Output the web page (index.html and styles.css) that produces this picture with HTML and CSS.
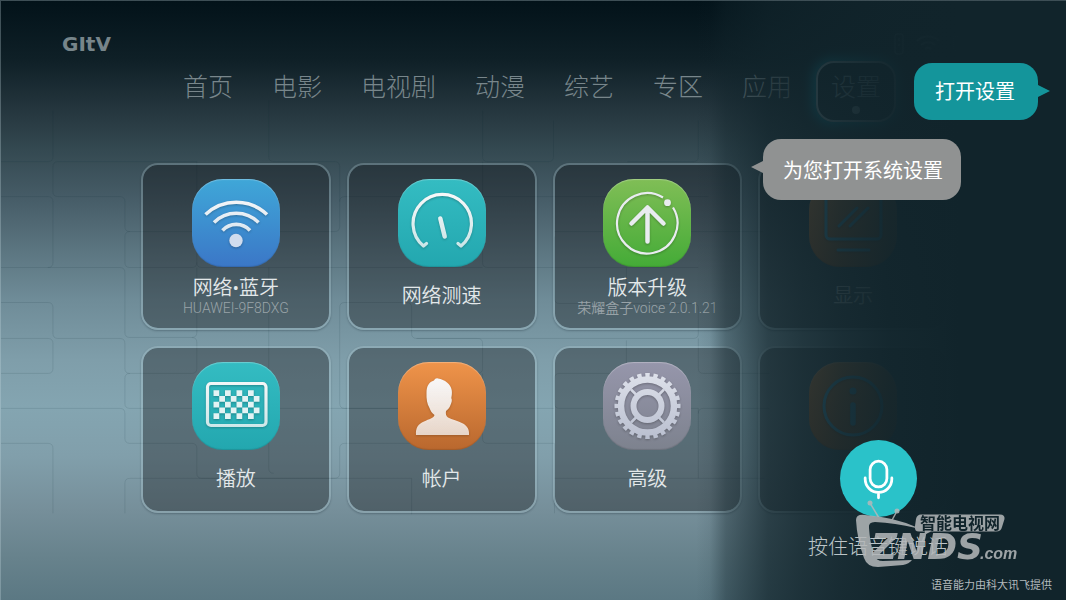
FILE: index.html
```html
<!DOCTYPE html>
<html lang="zh-CN">
<head>
<meta charset="utf-8">
<title>GITV 设置</title>
<link rel="stylesheet" href="styles.css">
</head>
<body>
<div class="screen">
  <svg class="bricks" viewBox="0 0 1066 600" preserveAspectRatio="xMidYMid slice" aria-hidden="true">
    <path d="M0 161H47q5 0 5-5V110M196 161H57q-5 0-5 5v25q0 5 5 5h62q5 0 5 5v25q0 5 5 5H334q5 0 5-5v-60q0-5-5-5H273q-5 0-5-5V100
      M0 196H47q5 0 5 5v61q0 5-5 5H0M47 267H119q5 0 5 5v60q0 5 5 5h62q5 0 5-5V267M129 231q-5 0-5 5v26q0 5 5 5h62q5 0 5-5V161M196 262q0 5 5 5h281
      M0 302H47q5 0 5 5v26q0 5 5 5H119q5 0 5 5v25q0 5 5 5h62q5 0 5-5v-26q0-5-5-5M0 338H47q5 0 5 5v25q0 5-5 5H0
      M0 408H119q5 0 5 5v25q0 5 5 5h62q5 0 5 5v25q0 5 5 5h133q5 0 5-5v-25q0-5 5-5h66q5 0 5-5v-25q0-5-5-5H129q-5 0-5-5v-25q0-5 5-5
      M0 443H47q5 0 5 5v65M124 513v-30q0-5 5-5h282M411 478v36M268 267v201q0 5 5 5M339 307q0-5 5-5h62q5 0 5 5v26q0 5 5 5h61q5 0 5 5v25q0 5-5 5
      M339 307v96q0 5 5 5h210M482 110v46q0 5 5 5h61q5 0 5-5V120M339 201q0-5 5-5h364M482 161v101q0 5 5 5h211M554 236v62q0 5 5 5h134q5 0 5 5v25q0 5-5 5H416
      M554 231h209M626 267v35M554 378q0-5 5-5h67V340M698 338v30q0 5 5 5h66M554 378v25q0 5 5 5h139M698 408v70M698 413q0-5 5-5h66M482 408v30q0 5 5 5h67V513M626 443v-35M698 120v36q0 5-5 5h-66M482 373v35M554 478h210"/>
  </svg>

  <header class="topbar">
    <span class="logo">GItV</span>
    <div class="status">
      <svg width="12" height="22" viewBox="0 0 12 22" fill="none" stroke="currentColor" aria-hidden="true"><rect x="2" y="1" width="8" height="20" rx="2"/><path d="M6 5v3M6 11v2"/></svg>
      <svg width="26" height="20" viewBox="0 0 26 20" fill="none" stroke="currentColor" stroke-width="2" aria-hidden="true"><path d="M2 7a16 16 0 0 1 22 0M6 11a10 10 0 0 1 14 0M10 15a5 5 0 0 1 6 0"/></svg>
      <time>07:32</time>
    </div>
  </header>

  <nav class="tabs">
    <a class="tab" href="#home">首页</a>
    <a class="tab" href="#movie">电影</a>
    <a class="tab" href="#tv">电视剧</a>
    <a class="tab" href="#anime">动漫</a>
    <a class="tab" href="#variety">综艺</a>
    <a class="tab" href="#zone">专区</a>
    <a class="tab" href="#apps">应用</a>
    <a class="tab tab-active" href="#settings" aria-current="page">设置</a>
  </nav>

  <svg class="defs" width="0" height="0" aria-hidden="true">
    <defs>
      <linearGradient id="ink" gradientUnits="userSpaceOnUse" x1="0" y1="16" x2="0" y2="74"><stop offset="0" stop-color="#f7f7f8"/><stop offset="1" stop-color="#fff" stop-opacity=".74"/></linearGradient>
      <linearGradient id="steel" gradientUnits="userSpaceOnUse" x1="0" y1="12" x2="0" y2="77"><stop offset="0" stop-color="#dde0ea"/><stop offset="1" stop-color="#b9bfcf"/></linearGradient>
    </defs>
  </svg>

  <main class="tiles">
    <button class="tile" type="button">
      <span class="icon icon-blue"><svg viewBox="0 0 88 88" fill="none" stroke="url(#ink)" stroke-width="3.600" aria-hidden="true">
        <path d="M13.500 35.500A44.700 44.700 0 0 1 75 35.500M22 43.500A31.400 31.400 0 0 1 66.500 43.500M30.500 51.500A18.500 18.500 0 0 1 58 51.500"/><circle cx="44" cy="61.500" r="6.700" fill="#d0dcee" stroke="none"/></svg></span>
      <span class="caption"><span class="name">网络•蓝牙</span><span class="note">HUAWEI-9F8DXG</span></span>
    </button>
    <button class="tile" type="button">
      <span class="icon icon-teal"><svg viewBox="0 0 88 88" fill="none" stroke="url(#ink)" stroke-linecap="round" stroke-linejoin="round" aria-hidden="true">
        <path stroke-width="3.200" d="M28.500 64.500L25.500 67A29.200 29.200 0 1 1 63 67L60 64.500"/><path stroke-width="4.500" d="M42.300 39.500L46.700 57.500"/></svg></span>
      <span class="caption"><span class="name">网络测速</span></span>
    </button>
    <button class="tile" type="button">
      <span class="icon icon-green"><svg viewBox="0 0 88 88" fill="none" stroke="#e9ecf0" aria-hidden="true">
        <path stroke-width="2.200" d="M70 28.500A30.200 30.200 0 1 1 60 18.500"/><circle cx="64.500" cy="23.700" r="3.400" fill="#e9ecf0" stroke="none"/><path stroke-width="4.500" stroke-linecap="round" stroke-linejoin="round" d="M44.500 62.500V29M28.500 44.500L44.500 28.500L60.500 44.500"/></svg></span>
      <span class="caption"><span class="name">版本升级</span><span class="note">荣耀盒子voice 2.0.1.21</span></span>
    </button>
    <button class="tile" type="button">
      <span class="icon icon-orange"><svg viewBox="0 0 88 88" fill="none" stroke="#5fc4ec" stroke-width="3" stroke-linecap="round" aria-hidden="true">
        <rect x="17" y="16" width="55" height="44" rx="4"/><path d="M30 47L48 29M41 47L59 29M29 71H60"/></svg></span>
      <span class="caption"><span class="name">显示</span></span>
    </button>
    <button class="tile" type="button">
      <span class="icon icon-teal"><svg viewBox="0 0 88 88" fill="none" stroke="url(#ink)" aria-hidden="true">
        <rect x="15.500" y="21.500" width="58.500" height="42" rx="3.500" stroke-width="3.200"/>
        <g stroke="#e3f3f4" stroke-width="5.750" stroke-dasharray="5.750 5.750"><path d="M21.500 31H67.500"/><path d="M27.250 36.750H67.500"/><path d="M21.500 42.500H67.500"/><path d="M27.250 48.250H67.500"/><path d="M21.500 54H67.500"/></g></svg></span>
      <span class="caption"><span class="name">播放</span></span>
    </button>
    <button class="tile" type="button">
      <span class="icon icon-orange"><svg viewBox="0 0 88 88" fill="url(#ink)" aria-hidden="true">
        <path d="M18 73C17.500 66 20 62 26 59.500C31 57 36 56 36.500 53C34 51 32.500 49 31.500 46C29 42 28.300 37 28.500 31C28.500 24 31 20 36 18.500C37 16.500 38.500 16 40 16.500C47 17.500 52.500 22 53.700 28C54.200 31 53.700 34 53.300 36C54.500 38 53.500 41 52.500 43C51.500 46 50 47.500 48 49C47.500 52 48 54 50 55.500C54 57.500 60 59 65 61.500C69.500 64 71.500 68 71 73Z"/></svg></span>
      <span class="caption"><span class="name">帐户</span></span>
    </button>
    <button class="tile" type="button">
      <span class="icon icon-gray"><svg viewBox="0 0 88 88" fill="none" stroke="url(#steel)" aria-hidden="true">
        <circle cx="44.500" cy="44" r="26.500" stroke-width="6.500"/><circle cx="44.500" cy="44" r="30.800" stroke-width="4.500" pathLength="48" stroke-dasharray="1.100 .9" stroke-dashoffset=".55"/>
        <circle cx="44.500" cy="44" r="14" stroke-width="6"/><path stroke-width="2.500" d="M28 27.500L34 33.500M61 27.500L55 33.500M28 60.500L34 54.500M61 60.500L55 54.500"/></svg></span>
      <span class="caption"><span class="name">高级</span></span>
    </button>
    <button class="tile" type="button" aria-label="关于">
      <span class="icon icon-orange"><svg viewBox="0 0 88 88" fill="none" stroke="#5fc4ec" stroke-width="3" stroke-linecap="round" aria-hidden="true">
        <circle cx="44" cy="44" r="29"/><circle cx="44" cy="29" r="3.500" fill="#5fc4ec" stroke="none"/><path stroke-width="5.500" d="M44 43V61"/></svg></span>
    </button>
  </main>

  <aside class="voice">
    <p class="bubble bubble-user">打开设置</p>
    <p class="bubble bubble-reply">为您打开系统设置</p>
    <button class="mic" type="button" aria-label="语音">
      <svg width="77" height="77" viewBox="0 0 78 78" fill="none" stroke="#fff" stroke-width="2.800" stroke-linecap="round" aria-hidden="true">
        <rect x="30.500" y="21.500" width="17" height="26" rx="8.500"/><path d="M25.500 38.500v1a13.500 13.500 0 0 0 27 0v-1M39 53.500V58.500"/></svg>
    </button>
    <p class="hint">按住语音键说话</p>
    <p class="credit">语音能力由科大讯飞提供</p>
  </aside>

  <svg class="watermark" width="168" height="70" viewBox="0 0 168 70" role="img" aria-label="智能电视网 ZNDS.com">
    <g fill="#b4b8ba">
      <path d="M3 20Q3 14 12 15Q40 17 63 27V28Q42 23 22 22Q15 22 16 28Q17 43 21 55Q23 61 30 61L59 60Q56 64 50 65Q38 66 25 67Q14 67 11 58Q4 39 3 20Z"/>
      <circle cx="17" cy="3" r="2.500"/><circle cx="44" cy="11" r="2.500"/>
      <path d="M17 3L26 18M44 11L38 22" stroke="#b4b8ba" stroke-width="1.500"/>
      <path d="M68 14.500H147Q152 14.500 151.500 19L149 27Q148 31.500 143 31.500H78L71 35L72 31.500H66Q61 31.500 62 26L63 19Q64 14.500 68 14.500Z"/>
      <text class="wm-main" x="18" y="59">ZNDS</text>
      <text class="wm-com" x="127" y="59">.com</text>
    </g>
    <text class="wm-cn" x="67" y="29">智能电视网</text>
  </svg>
</div>
</body>
</html>
```

FILE: styles.css
```css
* {
  box-sizing: border-box;
}

body {
  margin: 0;
  font-family: Roboto, "Noto Sans CJK SC", sans-serif;
}

p {
  margin: 0;
}

button {
  font: inherit;
  color: inherit;
}

.screen {
  position: relative;
  min-height: 100vh;
  overflow: hidden;
  border: solid rgba(200, 220, 225, .3);
  border-width: 1px 0 0 1px;
  background: linear-gradient(180deg, #021219 0%, #0f2027 10%, #24353d 18%, #344951 25%, #465c67 33%, #5c7681 42%, #6f8c98 50%, #7f9eaa 60%, #84a5b1 68%, #819fab 76%, #768f9a 85%, #67828c 93%, #5b7883 100%);
  background-origin: border-box;
}

.bricks {
  position: absolute;
  inset: 0;
  width: 100%;
  height: 100%;
  fill: none;
  stroke: rgba(10, 35, 45, .11);
}

.defs {
  position: absolute;
}

.topbar {
  position: relative;
  display: flex;
  justify-content: space-between;
  align-items: center;
  padding: 29px 60px 3px 61px;
}

.logo {
  font: bold 20px/28px "DejaVu Sans", sans-serif;
  color: #77858a;
}

.status {
  display: flex;
  align-items: center;
  gap: 10px;
  font-size: 22px;
  line-height: 28px;
  color: #8ba0a8;
}

.tabs {
  position: relative;
  display: flex;
  gap: 9px;
  padding-left: 167px;
}

.tab {
  display: flex;
  flex-direction: column;
  align-items: center;
  height: 61px;
  padding: 9px 13px 7px;
  border: 2px solid transparent;
  border-radius: 18px;
  font-size: 25px;
  font-weight: 300;
  line-height: 32px;
  color: #78868b;
  text-decoration: none;
}

.tab-active {
  border-color: #a5bbc2;
  color: #a5bbc2;
  box-shadow: 0 0 12px 3px #0ba5be;
}

.tab-active::after {
  content: "";
  flex: none;
  width: 8px;
  height: 8px;
  margin-top: 2px;
  border-radius: 50%;
  background: #a5bbc2;
}

.tiles {
  position: relative;
  display: grid;
  grid-template-columns: repeat(4, 1fr);
  gap: 16px;
  padding: 41px 118px 80px 140px;
}

.tile {
  display: flex;
  flex-direction: column;
  align-items: center;
  height: 167px;
  padding: 14px 0 4px;
  border: 2px solid rgba(190, 215, 222, .27);
  border-radius: 17px;
  background: rgba(10, 10, 12, .34);
  background-clip: padding-box;
  box-shadow: 0 1px 2px rgba(0, 20, 30, .25);
  color: #e3e8ea;
}

.icon {
  flex: none;
  width: 88px;
  height: 88px;
  border-radius: 31px;
  box-shadow: inset 0 1px 1px rgba(255, 255, 255, .28), inset 0 -1px 1px rgba(0, 0, 0, .12);
}

.icon svg {
  display: block;
  filter: drop-shadow(0 1px 1px rgba(0, 0, 0, .25));
}

.icon-blue {
  background: linear-gradient(#3fa7d8, #3b77c7);
}

.icon-teal {
  background: linear-gradient(#34bcc2, #23a7af);
}

.icon-green {
  background: linear-gradient(#80be56, #44ab37);
}

.icon-orange {
  background: linear-gradient(#ef944a, #b9682e);
}

.icon-gray {
  background: linear-gradient(#9696ab, #7d828e);
}

.caption {
  flex: 1;
  display: flex;
  flex-direction: column;
  justify-content: center;
  align-items: center;
}

.name {
  font-size: 20px;
  font-weight: 350;
  line-height: 24px;
}

.note {
  font-size: 14px;
  font-weight: 350;
  line-height: 16px;
  color: #99a3a8;
}

.voice {
  position: absolute;
  top: 0;
  right: 0;
  bottom: 0;
  display: flex;
  flex-direction: column;
  align-items: center;
  width: 376px;
  padding: 62px 0 5px;
  background: linear-gradient(90deg, rgba(17, 36, 43, 0) 6px, rgba(17, 36, 43, .08) 20px, rgba(17, 36, 43, .4) 36px, rgba(17, 36, 43, .55) 54px, rgba(17, 36, 43, .74) 78px, rgba(17, 36, 43, .84) 112px, rgba(17, 36, 43, .91) 150px, rgba(17, 36, 43, .97) 200px, #11242b 270px);
}

.bubble {
  position: relative;
  border-radius: 18px;
  font-size: 20px;
  line-height: 29px;
  color: #fff;
}

.bubble::after {
  content: "";
  position: absolute;
  top: 22px;
  border: solid transparent;
  border-width: 6px 12px;
}

.bubble-user {
  align-self: flex-end;
  margin-right: 28px;
  padding: 15px 23px 13px 21px;
  background: #14959b;
}

.bubble-user::after {
  left: 100%;
  border-left-color: #14959b;
}

.bubble-reply {
  align-self: flex-start;
  margin: 19px 0 0 73px;
  padding: 18px 18px 14px 20px;
  background: #909292;
}

.bubble-reply::after {
  right: 100%;
  border-right-color: #909292;
}

.mic {
  display: block;
  height: 77px;
  margin-top: auto;
  padding: 0;
  border: 0;
  border-radius: 50%;
  background: #2ac2c9;
}

.mic svg {
  display: block;
}

.hint {
  margin-top: 16px;
  font-size: 20px;
  font-weight: 300;
  line-height: 28px;
  color: #bcc5c8;
}

.credit {
  align-self: flex-end;
  margin: 16px 14px 0 0;
  font-size: 11px;
  line-height: 18px;
  color: #b3babd;
}

.watermark {
  position: absolute;
  right: 45px;
  bottom: 30px;
  opacity: .86;
}

.wm-main {
  font: italic bold 36px "DejaVu Sans", sans-serif;
}

.wm-com {
  font: italic bold 16px "Liberation Sans", sans-serif;
}

.wm-cn {
  font: bold 16px "Noto Sans CJK SC", sans-serif;
  fill: #11242b;
}
```
